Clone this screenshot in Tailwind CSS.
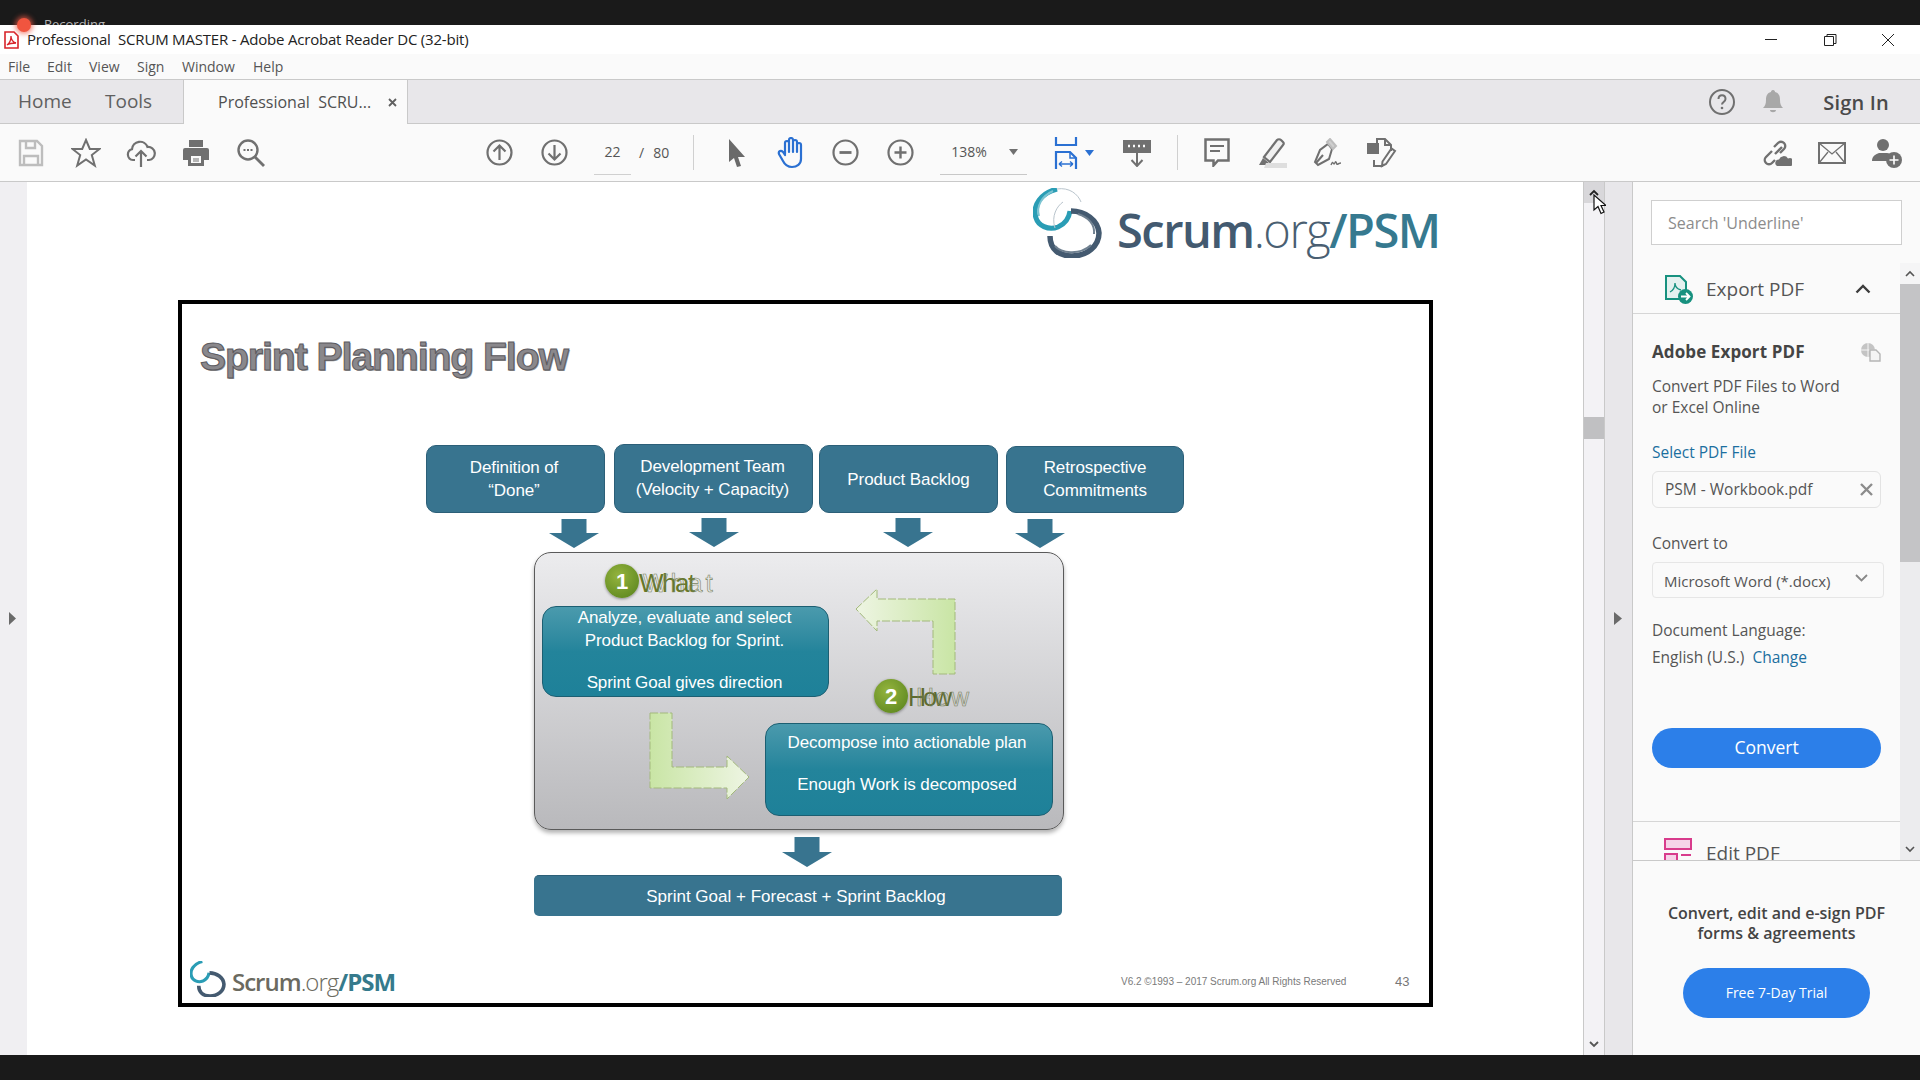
<!DOCTYPE html>
<html lang="en">
<head>
    <meta charset="UTF-8">
    <title>Professional SCRUM MASTER - Adobe Acrobat Reader DC (32-bit)</title>
    <script src="https://cdn.jsdelivr.net/npm/@tailwindcss/browser@4"></script>
</head>
<body class="bg-[#1a1a1a] font-['Open_Sans',sans-serif] overflow-hidden">
<div class="relative w-[1920px] h-[1080px] flex flex-col text-[#505050]">

    <!-- Recording strip -->
    <div class="h-[25px] bg-[#1a1a1a] overflow-hidden pl-[44px] pt-[16px] text-[13px] leading-[16px] text-[#b5b5b5]">Recording</div>
    <div class="absolute left-[17px] top-[18px] w-[14px] h-[14px] rounded-full bg-[#f0553f] shadow-[0_0_5px_2px_rgba(240,90,70,0.7)] z-10"></div>

    <!-- Title bar -->
    <div class="h-[29px] bg-white flex items-center text-[#222]">
        <svg class="ml-[4px] w-[15px] h-[18px]" viewBox="0 0 15 18"><path d="M1 1h9l4 4v12H1z" fill="#fff" stroke="#d8232a" stroke-width="1.600"/><path d="M3 14c3-2 4-6 4-9 0 3 2 6 5 7-3 0-6 0-9 2z" fill="none" stroke="#d8232a" stroke-width="1.300"/></svg>
        <span class="ml-[8px] text-[15px] whitespace-pre tracking-[-0.2px]">Professional  SCRUM MASTER - Adobe Acrobat Reader DC (32-bit)</span>
        <div class="ml-auto flex items-center">
            <svg class="w-[58px] h-[14px]" viewBox="0 0 58 14"><path d="M22 6.500h12" stroke="#222" stroke-width="1"/></svg>
            <svg class="w-[58px] h-[14px]" viewBox="0 0 58 14"><path d="M23.500 3.500h9v9h-9zM26 3.500V1.500h9v9h-2.500" fill="none" stroke="#222" stroke-width="1"/></svg>
            <svg class="w-[58px] h-[14px] mr-[3px]" viewBox="0 0 58 14"><path d="M23 1l12 12M35 1L23 13" stroke="#222" stroke-width="1"/></svg>
        </div>
    </div>

    <!-- Menu bar -->
    <div class="h-[26px] bg-[#fafafa] border-b border-[#c9c9c9] flex items-center pl-[8px] text-[14px] text-[#555]">
        <span class="w-[39px]">File</span>
        <span class="w-[42px]">Edit</span>
        <span class="w-[48px]">View</span>
        <span class="w-[45px]">Sign</span>
        <span class="w-[71px]">Window</span>
        <span>Help</span>
    </div>

    <!-- Tab bar -->
    <div class="h-[44px] bg-[#e8e7ea] border-b border-[#c9c9c9] flex items-stretch">
        <div class="w-[183px] flex items-center pl-[18px] text-[19px] text-[#606060]">
            <span class="w-[87px]">Home</span>
            <span>Tools</span>
        </div>
        <div class="w-[225px] -mb-px bg-[#fafafa] border-x border-[#c9c9c9] flex items-center pl-[34px] text-[16px] text-[#505050] whitespace-pre">
            <span class="w-[170px]">Professional  SCRU...</span>
            <svg class="w-[9px] h-[9px]" viewBox="0 0 9 9"><path d="M1 1l7 7M8 1L1 8" stroke="#606060" stroke-width="1.800"/></svg>
        </div>
        <div class="ml-auto flex items-center">
            <svg class="w-[28px] h-[28px]" viewBox="0 0 28 28" fill="none"><circle cx="14" cy="14" r="12" stroke="#707070" stroke-width="2"/><path d="M10.500 11c0-5 7-5 7 0 0 3-3.500 3-3.500 5.500" stroke="#707070" stroke-width="2"/><circle cx="14" cy="20" r="1.300" fill="#707070"/></svg>
            <svg class="ml-[26px] w-[22px] h-[26px]" viewBox="0 0 22 26"><path d="M11 1c1.500 0 2 1 2 2 4 1 5 4 5 8 0 4 1 6 3 8H1c2-2 3-4 3-8 0-4 1-7 5-8 0-1 .5-2 2-2zM8 21h6c0 3-6 3-6 0z" fill="#a8a8a8"/></svg>
            <span class="ml-[39px] mr-[31px] text-[20px] tracking-[0.2px] font-semibold text-[#4a4a4a] pt-[3px]">Sign In</span>
        </div>
    </div>

    <!-- Toolbar -->
    <div class="h-[58px] bg-[#fafafa] border-b border-[#c9c9c9] flex items-center pl-[3px] text-[#555]">
        <div class="w-[55px] flex justify-center"><svg class="w-[26px] h-[28px]" viewBox="0 0 26 28" fill="none" stroke="#bdbdbd" stroke-width="2.400"><path d="M2 2h17l5 5v19H2z"/><path d="M8 2v7h9V2M6 26v-9h14v9"/></svg></div>
        <div class="w-[55px] flex justify-center"><svg class="w-[30px] h-[30px]" viewBox="0 0 30 30" fill="none" stroke="#707070" stroke-width="2"><path d="M15 2l3.800 9h9.700l-7.700 6 3 10.500-8.800-6-8.800 6 3-10.500-7.700-6h9.700z"/></svg></div>
        <div class="w-[55px] flex justify-center"><svg class="w-[30px] h-[30px]" viewBox="0 0 30 30" fill="none" stroke="#707070" stroke-width="2.200"><path d="M9 22H7a5.500 5.500 0 0 1-1-10.800A8 8 0 0 1 21.500 9 6.500 6.500 0 0 1 23 22h-2"/><path d="M15 29V13M9.500 18.500L15 13l5.500 5.500"/></svg></div>
        <div class="w-[55px] flex justify-center"><svg class="w-[28px] h-[28px]" viewBox="0 0 28 28"><path d="M7 1h14v7H7zM3 9h22a2 2 0 0 1 2 2v10h-5v6H6v-6H1V11a2 2 0 0 1 2-2z" fill="#707070"/><path d="M9 17h10v7H9z" fill="#fafafa"/><path d="M11 20h6M11 22h6" stroke="#707070"/></svg></div>
        <div class="w-[55px] flex justify-center"><svg class="w-[30px] h-[30px]" viewBox="0 0 30 30" fill="none"><circle cx="12" cy="12" r="9.500" stroke="#707070" stroke-width="2.400"/><path d="M19 19l9 9" stroke="#707070" stroke-width="2.800"/><path d="M7.500 12h2M11 12h2M14.500 12h2" stroke="#707070" stroke-width="1.800"/></svg></div>

        <div class="ml-[194px] w-[55px] flex justify-center"><svg class="w-[27px] h-[27px]" viewBox="0 0 27 27" fill="none" stroke="#707070" stroke-width="2.200"><circle cx="13.500" cy="13.500" r="12"/><path d="M13.500 21V6.500M7.500 12.500l6-6 6 6"/></svg></div>
        <div class="w-[55px] flex justify-center"><svg class="w-[27px] h-[27px]" viewBox="0 0 27 27" fill="none" stroke="#707070" stroke-width="2.200"><circle cx="13.500" cy="13.500" r="12"/><path d="M13.500 6v14.500M7.500 14.500l6 6 6-6"/></svg></div>
        <div class="ml-[12px] w-[37px] h-[45px] mt-[-1px] border-b border-[#d0d0d0] flex items-center justify-center text-[14px]">22</div>
        <span class="ml-[8px] text-[14px]">/</span>
        <span class="ml-[9px] text-[14px]">80</span>
        <div class="ml-[24px] w-px h-[35px] bg-[#d0d0d0]"></div>

        <div class="ml-[14px] w-[55px] flex justify-center"><svg class="w-[20px] h-[28px]" viewBox="0 0 20 28"><path d="M3 0l16 18h-7l3 9-4 1-3-9-5 4z" fill="#6a6a6a"/></svg></div>
        <div class="w-[55px] flex justify-center"><svg class="w-[30px] h-[32px]" viewBox="0 0 30 32" fill="none" stroke="#2a70d2" stroke-width="2.200" stroke-linecap="round"><path d="M9 17V6a2 2 0 0 1 4 0V3a2 2 0 0 1 4 0v2a2 2 0 0 1 4 0v3a2 2 0 0 1 4 0v14c0 5-4 8-9 8-4 0-7-2-9-6l-4-7c-1-3 2-4 4-2l2 3M13 5v10M17 4v11M21 7v8"/></svg></div>
        <div class="w-[55px] flex justify-center"><svg class="w-[27px] h-[27px]" viewBox="0 0 27 27" fill="none" stroke="#707070" stroke-width="2.200"><circle cx="13.500" cy="13.500" r="12"/><path d="M7.500 13.500h12" stroke-width="2.800"/></svg></div>
        <div class="w-[55px] flex justify-center"><svg class="w-[27px] h-[27px]" viewBox="0 0 27 27" fill="none" stroke="#707070" stroke-width="2.200"><circle cx="13.500" cy="13.500" r="12"/><path d="M7.500 13.500h12M13.500 7.500v12" stroke-width="2.400"/></svg></div>

        <div class="ml-[12px] w-[87px] h-[45px] mt-[-1px] border-b border-[#c8c8c8] flex items-center pl-[11px] text-[14px]">
            <span class="w-[58px]">138%</span>
            <svg class="w-[9px] h-[6px]" viewBox="0 0 9 6"><path d="M0 0h9L4.500 6z" fill="#707070"/></svg>
        </div>
        <div class="ml-[26px] w-[26px] flex justify-center"><svg class="w-[24px] h-[32px]" viewBox="0 0 24 32" fill="none" stroke="#2a70d2" stroke-width="2.200"><path d="M2 0v8h20V0M2 32V15h14l6 6v11"/><path d="M16 15v6h6" stroke-width="1.500"/><path d="M5 27h14M5 27l3-2.500M5 27l3 2.500M19 27l-3-2.500M19 27l-3 2.500" stroke-width="1.400"/></svg></div>
        <svg class="ml-[6px] w-[9px] h-[6px]" viewBox="0 0 9 6"><path d="M0 0h9L4.500 6z" fill="#2a70d2"/></svg>
        <div class="ml-[15px] w-[55px] flex justify-center"><svg class="w-[30px] h-[28px]" viewBox="0 0 30 28" fill="none"><path d="M1 1h28v13H1z" fill="#707070"/><path d="M6 7h2M11 7h2M16 7h2M21 7h2" stroke="#fafafa" stroke-width="2.400"/><path d="M15 14v13M9.500 21l5.500 6 5.500-6" stroke="#707070" stroke-width="2"/></svg></div>
        <div class="ml-[13px] w-px h-[35px] bg-[#d0d0d0]"></div>

        <div class="ml-[11px] w-[55px] flex justify-center"><svg class="w-[26px] h-[29px]" viewBox="0 0 26 29" fill="none" stroke="#707070" stroke-width="2.500"><path d="M1.500 1.500h23v21H14l-4.500 5v-5h-8z"/><path d="M6 8h14M6 13h10" stroke-width="1.800"/></svg></div>
        <div class="w-[55px] flex justify-center"><svg class="w-[30px] h-[30px]" viewBox="0 0 30 30"><path d="M7 19L20 2c1-1 3-1 4 0l2 2c1 1 1 2 0 3L13 24z" fill="#f0f0f0" stroke="#707070" stroke-width="2.200"/><path d="M6 20l6 5-3 2H2z" fill="#707070"/><path d="M9 25h21v5H7z" fill="#dedede"/></svg></div>
        <div class="w-[55px] flex justify-center"><svg class="w-[30px] h-[30px]" viewBox="0 0 30 30" fill="none" stroke="#707070" stroke-width="2"><path d="M16 6l4 5-3 10-11 6-3-3 5-12z"/><path d="M15 4l3-3 6 7-3 3z" fill="#cfcfcf" stroke="#bdbdbd"/><path d="M4 25l7-8"/><path d="M19 27c2-5 2-1 3-1s1-3 2-2 0 3 2 2 1-1 3-1" stroke-width="1.400"/></svg></div>
        <div class="w-[55px] flex justify-center"><svg class="w-[30px] h-[30px]" viewBox="0 0 30 30" fill="none" stroke="#707070" stroke-width="2"><path d="M10 6V1h8l6 6v6M18 1v6h6M7 22v6h9"/><path d="M1 6h10v9H1z" fill="#707070"/><path d="M28 13l-9 13-4 2 .500-4.500 9-13z"/></svg></div>

        <div class="ml-auto flex items-center">
            <svg class="w-[30px] h-[28px]" viewBox="0 0 30 28" fill="none" stroke="#707070" stroke-width="2.400"><path d="M10 12L4 18a4 4 0 0 0 6 6l3-3M13 15l7-7M12 8l4-4a4 4 0 0 1 6 6l-4 4"/><path d="M15 27a3.500 3.500 0 0 1 2-6.500 5 5 0 0 1 9-1 4 4 0 0 1 3 7.500z" fill="#707070" stroke="none"/></svg>
            <svg class="ml-[26px] w-[28px] h-[22px]" viewBox="0 0 28 22" fill="none" stroke="#707070" stroke-width="2"><path d="M1 1h26v20H1z"/><path d="M1 1l13 11L27 1M1 21l9-11M27 21l-9-11" stroke-width="1.300"/></svg>
            <svg class="ml-[26px] mr-[18px] w-[30px] h-[30px]" viewBox="0 0 30 30"><circle cx="11" cy="7" r="6" fill="#707070"/><path d="M0 23c0-5 4-7 7-8h8c2 0 4 1 5 2-3 1-5 4-5 6z" fill="#707070"/><circle cx="22" cy="22" r="8" fill="#707070"/><path d="M17.500 22h9M22 17.500v9" stroke="#fff" stroke-width="1.600"/></svg>
        </div>
    </div>

    <!-- Work area -->
    <div class="h-[873px] flex">
        <div class="w-[27px] bg-[#f0eff2] flex items-center pl-[9px]">
            <svg class="w-[7px] h-[13px]" viewBox="0 0 7 13"><path d="M0 0l7 6.500L0 13z" fill="#6a6a6a"/></svg>
        </div>

        <!-- PDF page, a free canvas -->
        <div class="relative w-[1557px] bg-white border-r border-[#c9c9c9] overflow-hidden font-['Liberation_Sans',sans-serif]">
            <svg class="absolute left-[1006px] top-[6px] w-[70px] h-[70px]" viewBox="0 0 70 70" fill="none">
                <path d="M24 1C8 5-1 17 3 30c2 7 12 13 22 9 7-3 11-9 12-16" stroke="#2a9db5" stroke-width="5"/>
                <path d="M20 3C9 8 3 18 6 28" stroke="#7cc4d2" stroke-width="2"/>
                <path d="M24 1c12-2 21 5 24 13M30 14c-6 4-12 14-8 26" stroke="#b9c4cc" stroke-width="1"/>
                <path d="M38 23c14 0 27 9 28 22 0 13-12 23-27 23-12 0-22-6-22-20" stroke="#445a70" stroke-width="5.500"/>
                <path d="M22 58c6 7 24 10 36-1M45 26c10 3 17 10 16 20" stroke="#6f8090" stroke-width="2"/>
            </svg>
            <div class="absolute left-[1090px] top-[19px] text-[47px] leading-[58px] font-['Open_Sans',sans-serif] whitespace-nowrap tracking-[-1.500px]"><span class="font-semibold text-[#435a70]">Scrum</span><span class="font-light text-[#4a5f72]">.org</span><span class="font-semibold text-[#36798f]">/PSM</span></div>

            <!-- Slide -->
            <div class="absolute left-[151px] top-[118px] w-[1255px] h-[707px] border-4 border-black"></div>
            <div class="absolute left-[173px] top-[151px] text-[39px] leading-[48px] font-bold tracking-[-1px] text-[#8a888c] [-webkit-text-stroke:1px_#5c5a5f] [text-shadow:1px_1px_0_#9a9a9a] whitespace-nowrap">Sprint Planning Flow</div>

            <div class="absolute left-[399px] top-[263px] w-[179px] h-[68px] rounded-[10px] bg-[#38748f] border border-[#2c5f78] flex items-center justify-center text-center text-white text-[17px] leading-[23px] tracking-[-0.1px] pr-[3px]">Definition of<br>“Done”</div>
            <div class="absolute left-[587px] top-[262px] w-[199px] h-[69px] rounded-[10px] bg-[#38748f] border border-[#2c5f78] flex items-center justify-center text-center text-white text-[17px] leading-[23px] tracking-[-0.1px] pb-[2px] pr-[2px]">Development Team<br>(Velocity + Capacity)</div>
            <div class="absolute left-[792px] top-[263px] w-[179px] h-[68px] rounded-[10px] bg-[#38748f] border border-[#2c5f78] flex items-center justify-center text-center text-white text-[17px] leading-[23px] tracking-[-0.1px]">Product Backlog</div>
            <div class="absolute left-[979px] top-[264px] w-[178px] h-[67px] rounded-[10px] bg-[#38748f] border border-[#2c5f78] flex items-center justify-center text-center text-white text-[17px] leading-[23px] tracking-[-0.1px] pb-[2px]">Retrospective<br>Commitments</div>

            <svg class="absolute left-[522px] top-[337px] w-[50px] h-[29px]" viewBox="0 0 50 29"><path d="M12.500 0h25v14H50L25 29 0 14h12.500z" fill="#38748f"/></svg>
            <svg class="absolute left-[662px] top-[336px] w-[50px] h-[29px]" viewBox="0 0 50 29"><path d="M12.500 0h25v14H50L25 29 0 14h12.500z" fill="#38748f"/></svg>
            <svg class="absolute left-[856px] top-[336px] w-[50px] h-[29px]" viewBox="0 0 50 29"><path d="M12.500 0h25v14H50L25 29 0 14h12.500z" fill="#38748f"/></svg>
            <svg class="absolute left-[988px] top-[337px] w-[50px] h-[29px]" viewBox="0 0 50 29"><path d="M12.500 0h25v14H50L25 29 0 14h12.500z" fill="#38748f"/></svg>

            <!-- Grey panel -->
            <div class="absolute left-[507px] top-[370px] w-[530px] h-[278px] rounded-[17px] border border-[#5a5a5a] bg-gradient-to-b from-[#ececee] to-[#b9b9bc] shadow-[0_3px_4px_rgba(0,0,0,0.3)]"></div>

            <svg class="absolute left-[828px] top-[406px] w-[102px] h-[88px]" viewBox="0 0 102 88"><defs><linearGradient id="ga" x1="0" x2="1" y1="0" y2="0"><stop offset="0" stop-color="#eef5e3"/><stop offset="1" stop-color="#c9e5a5"/></linearGradient></defs><path d="M1 21L22 1v10h78v75H78V33H22v10z" fill="url(#ga)" stroke="#a3b97c" stroke-dasharray="8 2" stroke-width="1"/></svg>
            <svg class="absolute left-[622px] top-[530px] w-[105px] h-[92px]" viewBox="0 0 105 92"><defs><linearGradient id="gb" x1="0" x2="1" y1="0" y2="0"><stop offset="0" stop-color="#c9e5a5"/><stop offset="1" stop-color="#eef5e3"/></linearGradient></defs><path d="M1 1h22v54h55V44l22 21-22 22V76H1z" fill="url(#gb)" stroke="#a3b97c" stroke-dasharray="8 2" stroke-width="1"/></svg>

            <div class="absolute left-[515px] top-[424px] w-[287px] h-[91px] rounded-[14px] border border-[#1c5f72] bg-gradient-to-b from-[#4a9aad] via-[#23849b] to-[#1e8199] text-center text-white text-[17px] leading-[23px] tracking-[-0.1px] pr-[2px]"><div class="-mt-[1px]">Analyze, evaluate and select<br>Product Backlog for Sprint.<br><span class="block mt-[19px]">Sprint Goal gives direction</span></div></div>
            <div class="absolute left-[738px] top-[541px] w-[288px] h-[93px] rounded-[14px] border border-[#1c5f72] bg-gradient-to-b from-[#4a9aad] via-[#23849b] to-[#1e8199] text-center text-white text-[17px] leading-[23px] tracking-[-0.1px] pt-[7px] pr-[4px]">Decompose into actionable plan<br><span class="block mt-[19px]">Enough Work is decomposed</span></div>

            <div class="absolute left-[578px] top-[382px] w-[34px] h-[34px] rounded-full bg-[radial-gradient(circle_at_40%_35%,#94b43e,#55801a)] shadow-[0_1px_3px_rgba(0,0,0,0.4)] flex items-center justify-center text-white text-[22px] font-bold">1</div>
            <div class="absolute left-[612px] top-[386px] text-[26px] leading-[30px] text-[#66772a] tracking-[-1.500px] whitespace-nowrap">What</div>
            <div class="absolute left-[616px] top-[386px] text-[26px] leading-[30px] text-transparent [-webkit-text-stroke:0.6px_#7b8560] tracking-[3px] whitespace-nowrap">What</div>
            <div class="absolute left-[847px] top-[497px] w-[34px] h-[34px] rounded-full bg-[radial-gradient(circle_at_40%_35%,#94b43e,#55801a)] shadow-[0_1px_3px_rgba(0,0,0,0.4)] flex items-center justify-center text-white text-[22px] font-bold">2</div>
            <div class="absolute left-[881px] top-[500px] text-[25px] leading-[30px] text-[#5e6b30] tracking-[-3px] whitespace-nowrap">How</div>
            <div class="absolute left-[889px] top-[500px] text-[25px] leading-[30px] text-transparent [-webkit-text-stroke:0.6px_#7b8560] tracking-[1.500px] whitespace-nowrap">How</div>

            <svg class="absolute left-[755px] top-[655px] w-[50px] h-[30px]" viewBox="0 0 50 30"><path d="M12.500 0h25v15H50L25 30 0 15h12.500z" fill="#38748f"/></svg>
            <div class="absolute left-[507px] top-[693px] w-[528px] h-[41px] rounded-[5px] bg-[#38748f] border-t border-[#2c5f78] flex items-center justify-center text-white text-[17px] pr-[4px] pt-[1px]">Sprint Goal + Forecast + Sprint Backlog</div>

            <svg class="absolute left-[163px] top-[779px] w-[36px] h-[36px]" viewBox="0 0 70 70" fill="none">
                <path d="M24 1C8 5-1 17 3 30c2 7 12 13 22 9 7-3 11-9 12-16" stroke="#2a9db5" stroke-width="6"/>
                <path d="M38 23c14 0 27 9 28 22 0 13-12 23-27 23-12 0-22-6-22-20" stroke="#445a70" stroke-width="7"/>
            </svg>
            <div class="absolute left-[205px] top-[784px] text-[24px] leading-[32px] font-['Open_Sans',sans-serif] whitespace-nowrap tracking-[-1px]"><span class="font-semibold text-[#6b6a60]">Scrum</span><span class="font-light text-[#6b6a60]">.org</span><span class="font-bold text-[#357a8c]">/PSM</span></div>
            <div class="absolute left-[1094px] top-[793px] text-[10px] leading-[14px] text-[#7a7a7a] whitespace-nowrap">V6.2 ©1993 – 2017 Scrum.org All Rights Reserved</div>
            <div class="absolute left-[1368px] top-[792px] text-[13px] leading-[16px] text-[#777]">43</div>
        </div>

        <!-- Page scrollbar -->
        <div class="w-[21px] bg-[#f3f2f5] border-r border-[#c9c9c9] flex flex-col items-stretch">
            <div class="h-[21px] bg-[#d8d7da] flex items-center justify-center"><svg class="w-[10px] h-[7px]" viewBox="0 0 10 7" fill="none"><path d="M1 6l4-4 4 4" stroke="#222" stroke-width="1.800"/></svg></div>
            <div class="mt-[214px] h-[22px] bg-[#c0c0c2]"></div>
            <div class="mt-auto h-[21px] flex items-center justify-center"><svg class="w-[10px] h-[7px]" viewBox="0 0 10 7" fill="none"><path d="M1 1l4 4 4-4" stroke="#555" stroke-width="1.800"/></svg></div>
        </div>

        <!-- Collapse gutter -->
        <div class="w-[28px] bg-[#e8e7ea] border-r border-[#c9c9c9] flex items-center pl-[9px]">
            <svg class="w-[8px] h-[13px]" viewBox="0 0 8 13"><path d="M0 0l8 6.500L0 13z" fill="#6a6a6a"/></svg>
        </div>

        <!-- Tools pane -->
        <div class="flex-1 bg-[#fafafa] flex flex-col">
            <div class="ml-[18px] mt-[18px] w-[251px] h-[45px] bg-white border border-[#cfcfcf] flex items-center pl-[16px] text-[16px] text-[#8c8c8c]">Search 'Underline'</div>

            <div class="mt-[18px] h-[597px] flex overflow-hidden">
                <div class="w-[267px] overflow-hidden">
                    <div class="h-[51px] border-b border-[#d6d6d6] flex items-center pl-[31px] pt-[2px]">
                        <svg class="w-[29px] h-[29px]" viewBox="0 0 29 29" fill="none"><path d="M2 1h14l6 6v17H2z" fill="#e4f1ef" stroke="#17917f" stroke-width="2"/><path d="M6 17c4-2 5-6 5-9 0 3 2 6 6 7" stroke="#17917f" stroke-width="1.300"/><circle cx="21.500" cy="21.500" r="7.500" fill="#17917f"/><path d="M17 21.500h8M22 18l3.500 3.500L22 25" stroke="#fff" stroke-width="1.800"/></svg>
                        <span class="ml-[13px] text-[19px] text-[#555] w-[149px]">Export PDF</span>
                        <svg class="w-[16px] h-[10px]" viewBox="0 0 16 10" fill="none"><path d="M1.500 8.500L8 2l6.500 6.500" stroke="#3c3c3c" stroke-width="2.400"/></svg>
                    </div>
                    <div class="pl-[19px] relative">
                        <div class="mt-[26px] h-[24px] leading-[24px] text-[17px] font-bold text-[#444] tracking-[0.1px]">Adobe Export PDF</div>
                        <svg class="absolute left-[227px] top-[2px] w-[21px] h-[20px]" viewBox="0 0 21 20" fill="none"><circle cx="8" cy="8" r="7" fill="#c4c4c4"/><path d="M1 8h14M8 1v14" stroke="#f5f5f5"/><path d="M10 8h6l4 4v7H10z" fill="#f4f4f4" stroke="#b5b5b5" stroke-width="1.400"/></svg>
                        <div class="mt-[12px] text-[15.500px] leading-[21px] text-[#555]">Convert PDF Files to Word<br>or Excel Online</div>
                        <div class="mt-[24px] h-[20px] leading-[20px] text-[15.500px] text-[#1c6f9f]">Select PDF File</div>
                        <div class="mt-[9px] w-[229px] h-[37px] rounded-[6px] border border-[#e3e3e3] flex items-center pl-[12px] text-[15.500px] text-[#555] whitespace-pre">
                            <span class="w-[195px] shrink-0 pt-[1px]">PSM - Workbook.pdf</span>
                            <svg class="w-[13px] h-[13px]" viewBox="0 0 13 13"><path d="M1 1l11 11M12 1L1 12" stroke="#8c8c8c" stroke-width="2.400"/></svg>
                        </div>
                        <div class="mt-[25px] h-[20px] leading-[20px] text-[15.500px] text-[#555]">Convert to</div>
                        <div class="mt-[9px] w-[232px] h-[36px] rounded-[4px] border border-[#e6e6e6] flex items-center pl-[11px] text-[15px] text-[#555]">
                            <span class="w-[191px] pt-[3px]">Microsoft Word (*.docx)</span>
                            <svg class="w-[13px] h-[8px] -mt-[4px]" viewBox="0 0 13 8" fill="none"><path d="M1 1l5.500 5.500L12 1" stroke="#888" stroke-width="1.800"/></svg>
                        </div>
                        <div class="mt-[22px] h-[20px] leading-[20px] text-[15.500px] text-[#555]">Document Language:</div>
                        <div class="mt-[7px] h-[20px] leading-[20px] text-[15.500px] text-[#555]">English (U.S.)<span class="ml-[8px] text-[#1c6f9f]">Change</span></div>
                        <div class="mt-[61px] w-[229px] h-[40px] rounded-full bg-[#2c7fe9] flex items-center justify-center text-[17.500px] text-white pb-[1px]">Convert</div>
                    </div>
                    <div class="mt-[53px] border-t border-[#d6d6d6] flex pt-[16px] pl-[31px]">
                        <svg class="w-[28px] h-[32px] shrink-0" viewBox="0 0 28 32" fill="none"><path d="M1 1h26v10H1z" fill="#f6d3e8" stroke="#d83c8c" stroke-width="2"/><path d="M1 16h12v10H1z" fill="#f6d3e8" stroke="#d83c8c" stroke-width="2"/><path d="M17 17h10" stroke="#d83c8c" stroke-width="2"/></svg>
                        <span class="ml-[14px] text-[19px] leading-[30px] text-[#555]">Edit PDF</span>
                    </div>
                </div>
                <div class="w-[20px] bg-[#ececee] flex flex-col">
                    <div class="h-[21px] bg-[#f5f5f6] flex items-center justify-center"><svg class="w-[10px] h-[7px]" viewBox="0 0 10 7" fill="none"><path d="M1 6l4-4 4 4" stroke="#555" stroke-width="1.600"/></svg></div>
                    <div class="h-[278px] bg-[#c4c4c6]"></div>
                    <div class="mt-auto h-[21px] flex items-center justify-center"><svg class="w-[10px] h-[7px]" viewBox="0 0 10 7" fill="none"><path d="M1 1l4 4 4-4" stroke="#555" stroke-width="1.600"/></svg></div>
                </div>
            </div>

            <div class="flex-1 border-t border-[#c9c9c9] flex flex-col items-center pt-[42px]">
                <div class="text-center text-[16px] leading-[20px] font-semibold text-[#444]">Convert, edit and e-sign PDF<br>forms &amp; agreements</div>
                <div class="mt-[25px] w-[187px] h-[50px] rounded-full bg-[#2c7fe9] flex items-center justify-center text-[14px] text-white pb-[1px]">Free 7-Day Trial</div>
            </div>
        </div>
    </div>

    <!-- Bottom strip -->
    <div class="h-[25px] bg-[#1a1a1a]"></div>

    <!-- Mouse pointer from the recording -->
    <svg class="absolute left-[1593px] top-[194px] w-[13px] h-[21px] z-10" viewBox="0 0 13 21"><path d="M1 1v15l4-3.500 3 7 3-1.500-3-6.500h5z" fill="#fff" stroke="#111" stroke-width="1.200"/></svg>
</div>
</body>
</html>
